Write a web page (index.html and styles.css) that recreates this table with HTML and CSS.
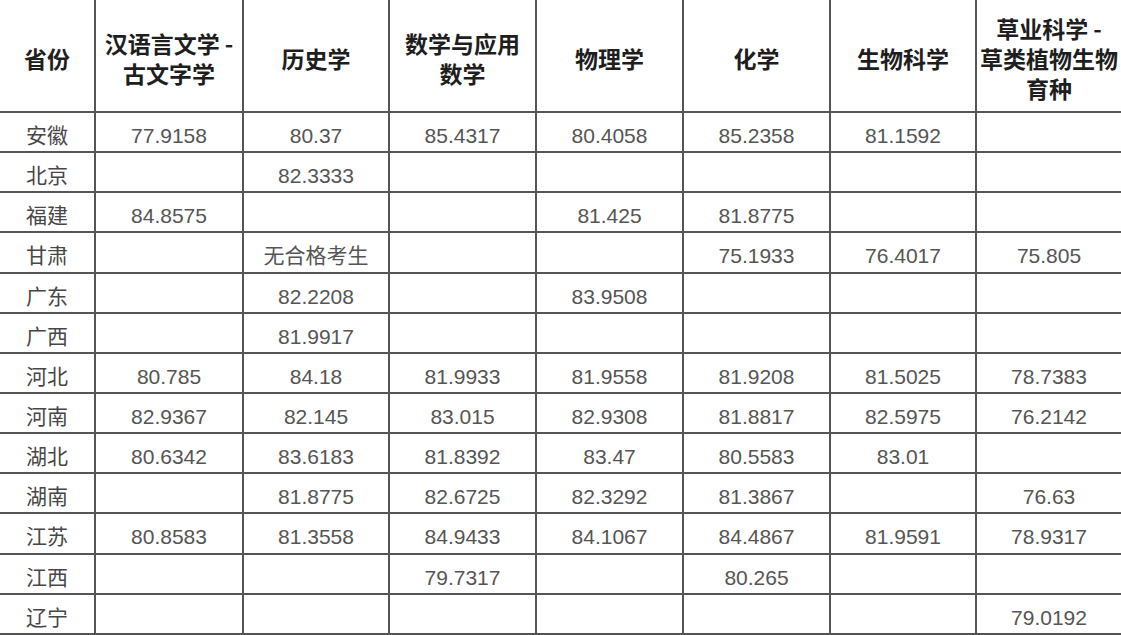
FILE: index.html
```html
<!DOCTYPE html>
<html lang="zh-CN">
<head>
<meta charset="utf-8">
<title>各省成绩</title>
<link rel="stylesheet" href="styles.css">
</head>
<body>
<table class="scores">
  <colgroup>
    <col class="c-prov">
    <col class="c-a">
    <col class="c-b">
    <col class="c-c">
    <col class="c-d">
    <col class="c-e">
    <col class="c-f">
    <col class="c-g">
  </colgroup>
  <thead>
    <tr class="head-row">
      <th>省份</th>
      <th>汉语言文学 -<br>古文字学</th>
      <th>历史学</th>
      <th>数学与应用<br>数学</th>
      <th>物理学</th>
      <th>化学</th>
      <th>生物科学</th>
      <th>草业科学 -<br>草类植物生物<br>育种</th>
    </tr>
  </thead>
  <tbody>
    <tr><td>安徽</td><td>77.9158</td><td>80.37</td><td>85.4317</td><td>80.4058</td><td>85.2358</td><td>81.1592</td><td></td></tr>
    <tr><td>北京</td><td></td><td>82.3333</td><td></td><td></td><td></td><td></td><td></td></tr>
    <tr><td>福建</td><td>84.8575</td><td></td><td></td><td>81.425</td><td>81.8775</td><td></td><td></td></tr>
    <tr><td>甘肃</td><td></td><td>无合格考生</td><td></td><td></td><td>75.1933</td><td>76.4017</td><td>75.805</td></tr>
    <tr><td>广东</td><td></td><td>82.2208</td><td></td><td>83.9508</td><td></td><td></td><td></td></tr>
    <tr><td>广西</td><td></td><td>81.9917</td><td></td><td></td><td></td><td></td><td></td></tr>
    <tr><td>河北</td><td>80.785</td><td>84.18</td><td>81.9933</td><td>81.9558</td><td>81.9208</td><td>81.5025</td><td>78.7383</td></tr>
    <tr><td>河南</td><td>82.9367</td><td>82.145</td><td>83.015</td><td>82.9308</td><td>81.8817</td><td>82.5975</td><td>76.2142</td></tr>
    <tr><td>湖北</td><td>80.6342</td><td>83.6183</td><td>81.8392</td><td>83.47</td><td>80.5583</td><td>83.01</td><td></td></tr>
    <tr><td>湖南</td><td></td><td>81.8775</td><td>82.6725</td><td>82.3292</td><td>81.3867</td><td></td><td>76.63</td></tr>
    <tr><td>江苏</td><td>80.8583</td><td>81.3558</td><td>84.9433</td><td>84.1067</td><td>84.4867</td><td>81.9591</td><td>78.9317</td></tr>
    <tr><td>江西</td><td></td><td></td><td>79.7317</td><td></td><td>80.265</td><td></td><td></td></tr>
    <tr><td>辽宁</td><td></td><td></td><td></td><td></td><td></td><td></td><td>79.0192</td></tr>
  </tbody>
</table>
</body>
</html>
```

FILE: styles.css
```css
html, body {
  margin: 0;
  padding: 0;
  background: #ffffff;
  overflow: hidden;
}

.scores {
  border-collapse: collapse;
  table-layout: fixed;
  width: 1121px;
  border: none;
}

.c-prov { width: 95px; }
.c-a { width: 148px; }
.c-b { width: 146px; }
.c-c { width: 147px; }
.c-d { width: 147px; }
.c-e { width: 147px; }
.c-f { width: 146px; }
.c-g { width: 145px; }

.scores th,
.scores td {
  border: 2px solid #555555;
  text-align: center;
  overflow: hidden;
  white-space: nowrap;
}

.scores th {
  height: 107px;
  padding: 4px 0 0;
  font-family: "Noto Sans CJK SC", "Noto Sans", sans-serif;
  font-weight: 700;
  font-size: 23px;
  line-height: 30px;
  color: #1e1e1e;
  border-top: none;
  vertical-align: middle;
}

.scores td {
  height: 30.15px;
  padding: 8px 0 0;
  font-family: "Liberation Sans", "Noto Sans CJK SC", sans-serif;
  font-size: 21px;
  line-height: 24px;
  color: #555555;
  vertical-align: middle;
}

.scores tr > :first-child {
  border-left: none;
}

.scores tr > :last-child {
  border-right: none;
}

.scores td:first-child {
  color: #474747;
}
```
